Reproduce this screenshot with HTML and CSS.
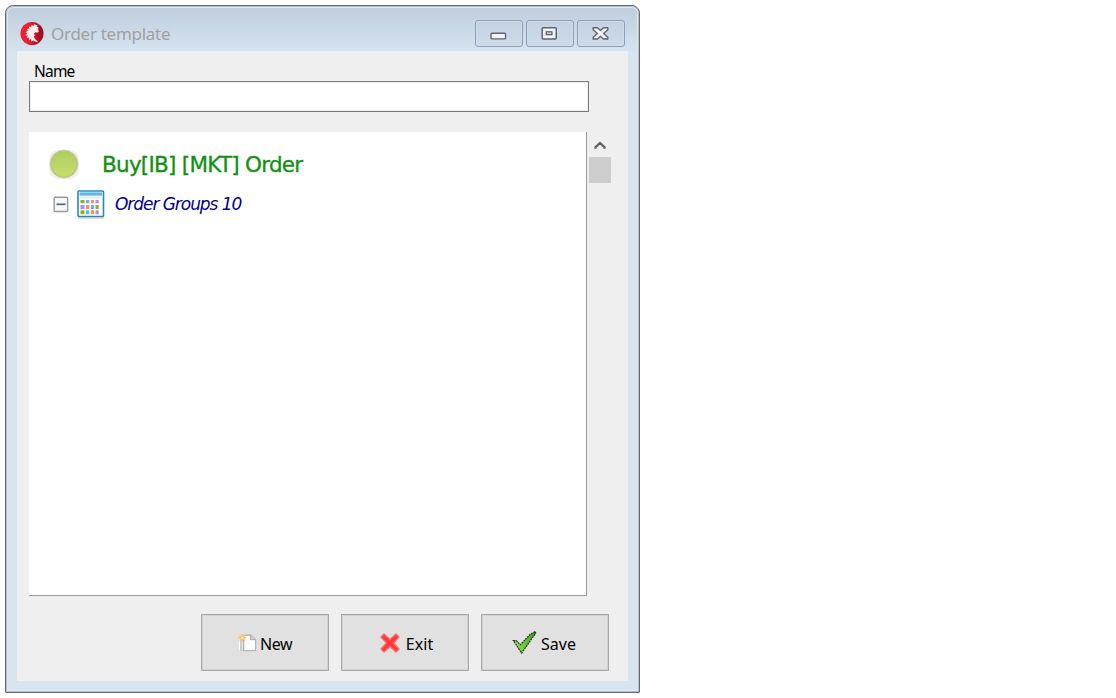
FILE: index.html
```
<!DOCTYPE html>
<html lang="en">
<head>
<meta charset="utf-8">
<title>Order template</title>
<link rel="stylesheet" href="styles.css">
</head>
<body>
<main class="window">
  <header class="titlebar">
    <svg class="logo" viewBox="0 0 26 26">
      <defs><linearGradient id="red"><stop offset=".35" stop-color="#ee2036"/><stop offset=".8" stop-color="#a40f20"/></linearGradient></defs>
      <circle cx="13" cy="13" r="12.500" fill="url(#red)"/>
      <path d="M19 4l-4-1 .2 1.500-3-.5.3 1.600-3 .2.7 1.500-2.700 1 1.200 1.300L6 12l2 .8L6 15l2.500.2-1 2.600 2.400-.5-.1 2.900 2.200-1.200.2 2.800 2-1.300 3.300 1.800 2.200-.3-4-3.700-.6-2.500 1.600-1-1.800-1.300 1.700-1.900 2 .6 1.800-1-.8-2.700.5-2.200-1.800-.6z" fill="#ffecec"/>
    </svg>
    <h1 class="title">Order template</h1>
    <div class="controls">
      <button class="control" aria-label="Minimize"><svg viewBox="0 0 18 16"><rect x="1" y="7.700" width="15.500" height="6" rx="1" fill="#f4f4f4" stroke="#5e6475" stroke-width="1.500"/></svg></button>
      <button class="control" aria-label="Maximize"><svg viewBox="0 0 18 16"><rect x="1.200" y="1.900" width="15" height="12" rx="1" fill="#f4f4f4" stroke="#5e6475" stroke-width="1.600"/><rect x="5.600" y="6.200" width="6" height="3" fill="#c8d5e5" stroke="#5e6475" stroke-width="1.400"/></svg></button>
      <button class="control" aria-label="Close"><svg viewBox="0 0 18 16"><path d="M1.200 1.900h4.600L9 4.800l3.200-2.900h4.600v2L12.300 7.900l4.500 4v2h-4.600L9 11l-3.200 2.900H1.200v-2l4.500-4-4.500-4z" fill="#f4f4f4" stroke="#5e6475" stroke-width="1.500" stroke-linejoin="round"/></svg></button>
    </div>
  </header>
  <section class="panel">
    <label class="label" for="name">Name</label>
    <input class="field" id="name" type="text">
    <div class="browser">
      <div class="tree">
        <div class="order">
          <svg class="dot" viewBox="0 0 34 34"><defs><linearGradient id="lime" x2="0" y2="1"><stop stop-color="#b0cc62"/><stop offset="1" stop-color="#c8de6b"/></linearGradient></defs><rect x="2" y="3" width="30" height="29" rx="9" fill="#f0f0ef"/><circle cx="17" cy="17" r="14.500" fill="#dce1cb"/><circle cx="17" cy="17" r="13" fill="url(#lime)" stroke="#b3ca7c" stroke-width="1.600"/></svg>
          <span class="order-name">Buy[IB] [MKT] Order</span>
        </div>
        <div class="group">
          <svg class="toggle" viewBox="0 0 16 17"><rect x="1.200" y="1.300" width="13.400" height="14.200" rx="1" fill="#f7f7f7" stroke="#999" stroke-width="1.400"/><path d="M3.500 8.300h9" stroke="#5265a5" stroke-width="1.700"/></svg>
          <svg class="calendar" viewBox="0 0 28 30">
            <rect x="1" y="27" width="26" height="2" fill="#dedede"/>
            <rect x="1" y="1" width="25.500" height="25.500" rx="1" fill="#fff" stroke="#248bc0" stroke-width="1.600"/>
            <path d="M2.500 4h22.500" stroke="#62b5e2" stroke-width="3.200"/><path d="M3 7.500h21.500" stroke="#deedf5" stroke-width="2"/>
            <g fill="#9bad18"><path d="M3.500 10h4v3.300h-4zM3.500 20.300h4v4h-4zM18.500 15h3.200v4h-3.200z"/></g>
            <g fill="#5ab9ec"><path d="M9 10h3.300v3.300H9zM13.800 15h3.300v4h-3.300zM9 20.300h3.300v4H9z"/></g>
            <g fill="#ff8c50"><path d="M13.800 10h3.300v3.300h-3.300zM9 15h3.300v4H9zM13.800 20.300h3.300v4h-3.300z"/></g>
            <g fill="#b18af2"><path d="M3.500 15h4v4h-4zM18.500 10h3.200v3.300h-3.200zM18.500 20.300h3.200v4h-3.200z"/></g>
          </svg>
          <span class="group-name">Order Groups 10</span>
        </div>
      </div>
      <div class="scrollbar">
        <svg class="arrow" viewBox="0 0 12 9"><path d="M1.500 7.700v-1.500L6 2l4.500 4.200v1.500" fill="none" stroke="#606060" stroke-width="2.300"/></svg>
        <div class="thumb"></div>
      </div>
    </div>
    <footer class="actions">
      <button class="action"><svg class="icon-new" viewBox="0 0 20 20"><path d="M6 2.500h8l4.500 4.500v11.500H6z" fill="#fff" stroke="#b4b4b4" stroke-width="1.300"/><path d="M2 6v12" stroke="#fff" stroke-width="2"/><path d="M3 7.500V18h2.500M9 1.800h4l4 4" fill="none" stroke="#c5c5c5" stroke-width="1.500"/><path d="M13 2v5h5" fill="#ccc" stroke="#aaa"/><path d="M4.500 1v8M.5 5h8M1.700 2.200l5.600 5.600m0-5.600L1.700 7.800" stroke="#f5c16c" stroke-width="1.500"/><circle cx="4.500" cy="5" r="1.300" fill="#fff1b5"/></svg><span class="caption caption-new">New</span></button>
      <button class="action"><svg class="icon-exit" viewBox="0 0 20 20"><path d="M4 1l6 5.500L16 1l3 3-5.500 6 5.500 6-3 3-6-5.500L4 19l-3-3 5.500-6L1 4z" fill="#ff3638" stroke="#ff6b6b" stroke-width="1.400" stroke-linejoin="round"/></svg><span class="caption caption-exit">Exit</span></button>
      <button class="action"><svg class="icon-save" viewBox="0 0 26 25"><defs><linearGradient id="green"><stop stop-color="#a1ef48"/><stop offset="1" stop-color="#31a017"/></linearGradient></defs><path d="M1.500 10.500h3l4 4.500L19 4 24.500 1v2L10 23.500z" fill="url(#green)" stroke="#26351d" stroke-width="1.300" stroke-dasharray="2 .8"/></svg><span class="caption caption-save">Save</span></button>
    </footer>
  </section>
</main>
</body>
</html>
```

FILE: styles.css
```
* { box-sizing: border-box; }
body { margin: 0; padding: 5px 0 0 5px; background: #fff; overflow: hidden; }
svg { display: block; flex: none; overflow: visible; }
button { font: inherit; margin: 0; }

.window {
  width: 635px;
  height: 688px;
  padding: 0 11px 11px;
  border: 1px solid #666a6e;
  border-radius: 8px 8px 1px 1px;
  background: linear-gradient(#becddc, #d7e4f1 47px);
  box-shadow: inset 0 0 0 1px #b5bfc9, inset 0 0 0 2px #dfe8f1;
}
.titlebar { height: 45px; display: flex; align-items: flex-start; padding: 14px 3px 0 3px; }
.logo { width: 24px; height: 25px; margin-top: 1px; }
.title {
  margin: 2px 0 0 7px;
  width: 130px;
  font: 400 17px/24px "Noto Sans", sans-serif;
  color: #a0a0a0;
  white-space: nowrap;
  letter-spacing: -.28px;
}
.controls { display: flex; gap: 3px; margin-left: auto; }
.control {
  display: grid;
  place-items: center;
  width: 48px;
  height: 27px;
  padding: 0 1px 0 0;
  border: 1px solid #8f9db8;
  border-radius: 3px;
  background: linear-gradient(#c4d2e1, #cddae8);
  box-shadow: inset 0 0 0 1px #d0dbe9;
}
.control svg { width: 17px; height: 15px; }

.panel {
  height: 630px;
  padding: 10px 16px 10px 12px;
  background: #efefef;
  display: flex;
  flex-direction: column;
}
.label { height: 20px; padding-left: 5px; font: 15.500px/20px "Noto Sans", sans-serif; color: #000; letter-spacing: -.8px; }
.field { width: 560px; height: 31px; border: 1px solid #7b7b7b; background: #fff; padding: 0 6px; outline: 0; box-shadow: inset 0 0 0 1px #ededed; }
.browser { display: flex; height: 464px; margin-top: 20px; gap: 2px; }
.tree { width: 558px; padding: 15px 18px; background: #fff; border: solid #9b9b9b; border-width: 0 1px 1px 0; }
.order { display: flex; align-items: center; height: 34px; }
.dot { width: 34px; height: 34px; }
.order-name {
  margin: 1px 0 0 21px;
  font: 21.500px/30px "DejaVu Sans", sans-serif;
  letter-spacing: -.750px;
  color: #129012;
  -webkit-text-stroke: .3px #129012;
  white-space: nowrap;
}
.group { display: flex; align-items: center; height: 46px; padding-left: 6px; }
.toggle { width: 16px; height: 17px; }
.calendar { width: 28px; height: 30px; margin: 2px 0 0 8px; }
.group-name {
  margin: 0 0 0 10px;
  font: italic 17px/26px "DejaVu Sans", sans-serif;
  letter-spacing: -1.050px;
  color: #00008b;
  white-space: nowrap;
}
.scrollbar { width: 23px; padding-top: 9px; }
.arrow { width: 12px; height: 9px; margin-left: 5px; }
.thumb { width: 22px; height: 26px; margin-top: 7px; background: #cdcdcd; }
.actions { display: flex; justify-content: flex-end; gap: 12px; margin: 18px 3px 0 0; }
.action {
  display: flex;
  align-items: center;
  justify-content: center;
  width: 128px;
  height: 57px;
  padding: 0;
  border: 1px solid #a8a8a8;
  box-shadow: inset 0 0 0 1px #d2d2d2;
  background: #e1e1e1;
  color: #000;
}
.caption { font: 16px/24px "Noto Sans", sans-serif; letter-spacing: -.5px; white-space: nowrap; margin-top: 2px; }
.icon-new { width: 19px; height: 19px; }
.caption-new { margin-left: 3px; }
.icon-exit { width: 20px; height: 20px; margin-left: 3px; }
.caption-exit { margin-left: 6px; letter-spacing: .1px; }
.icon-save { width: 25px; height: 25px; margin-left: -2px; }
.caption-save { margin-left: 4px; letter-spacing: 0; }
```
